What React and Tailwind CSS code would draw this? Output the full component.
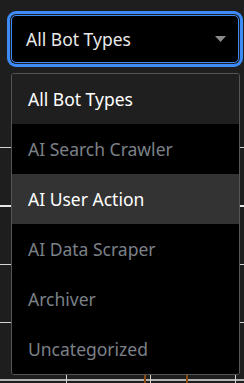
import React from "react";

const OPTIONS = [
  { label: "All Bot Types", tone: "selected" },
  { label: "AI Search Crawler", tone: "muted" },
  { label: "AI User Action", tone: "hover" },
  { label: "AI Data Scraper", tone: "muted" },
  { label: "Archiver", tone: "muted" },
  { label: "Uncategorized", tone: "muted" },
];

const TONES = {
  selected: "bg-[#1f1f1f] text-white",
  hover: "bg-[#333333] text-white",
  muted: "bg-black text-[#7b8088]",
};

function ChartGrid() {
  return (
    <svg className="absolute inset-0" width="244" height="383" viewBox="0 0 244 383">
      <g stroke="#d4d4d4">
        <line x1="0" y1="147.5" x2="244" y2="147.5" strokeWidth="1" />
        <line x1="0" y1="206" x2="244" y2="206" strokeWidth="2" stroke="#e6e6e6" />
        <line x1="0" y1="264.5" x2="244" y2="264.5" strokeWidth="1" />
        <line x1="0" y1="322.5" x2="244" y2="322.5" strokeWidth="1" />
        <line x1="0" y1="380" x2="244" y2="380" strokeWidth="1.5" stroke="#e6e6e6" />
        <line x1="66.5" y1="375" x2="66.5" y2="383" strokeWidth="1" />
        <line x1="150.5" y1="375" x2="150.5" y2="383" strokeWidth="1" />
        <line x1="235.5" y1="375" x2="235.5" y2="383" strokeWidth="1" />
      </g>
      <g stroke="#8a4a12" strokeWidth="2">
        <line x1="145" y1="375" x2="145" y2="383" />
        <line x1="187" y1="375" x2="187" y2="383" />
      </g>
    </svg>
  );
}

export default function App() {
  return (
    <div
      className="relative w-[244px] h-[383px] overflow-hidden bg-[#1e1e1e]"
      style={{ fontFamily: '"Noto Sans", "Open Sans", sans-serif' }}
    >
      <ChartGrid />

      <div className="relative pt-[15px] pl-[11px]">
        {/* Select */}
        <button className="flex items-center justify-between w-[228px] h-[48px] pl-[14px] pr-[12px] bg-black border border-[#3d8bf7] rounded-[5px] ring-[3px] ring-[#3d8bf7] ring-offset-1 ring-offset-[#1e1e1e] text-[17.5px] text-[#e8e8e8]">
          <span>All Bot Types</span>
          <svg width="11" height="6" viewBox="0 0 11 6">
            <path d="M0 0 L11 0 L5.5 6 Z" fill="#8a8a8a" />
          </svg>
        </button>
      </div>

      {/* Menu */}
      <ul className="absolute left-[11px] top-[73px] w-[229px] border border-[#555555] rounded-[3px] overflow-hidden">
        {OPTIONS.map((o) => (
          <li key={o.label} className={`h-[50px] flex items-center pl-[16px] text-[17.5px] ${TONES[o.tone]}`}>
            {o.label}
          </li>
        ))}
      </ul>
    </div>
  );
}
